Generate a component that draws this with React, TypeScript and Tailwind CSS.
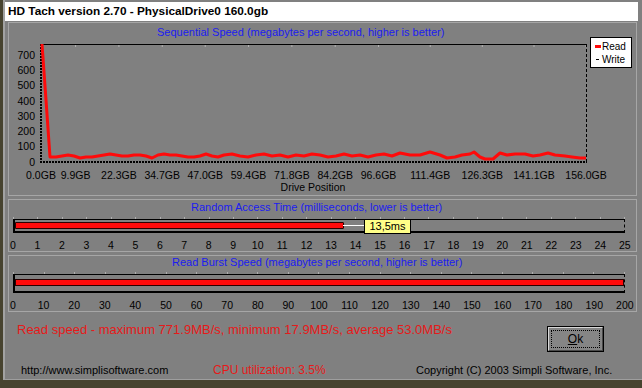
import React from "react";

const gbLabels = ["0.0", "9.9", "22.3", "34.7", "47.0", "59.4", "71.8", "84.2", "96.6", "111.4", "126.3", "141.1", "156.0"];

// page coordinates of the read curve
const readPoints: [number, number][] = [
  [42, 44], [46, 100], [50, 157], [56, 157], [62, 156], [68, 155], [74, 156], [80, 158], [86, 157],
  [92, 157], [98, 156], [104, 155], [110, 154], [116, 155], [122, 156], [128, 156], [134, 155],
  [140, 155], [146, 156], [152, 158], [158, 155], [164, 154], [170, 155], [176, 155], [182, 156],
  [188, 157], [194, 157], [200, 156], [206, 154], [212, 156], [218, 157], [224, 155], [232, 154],
  [240, 156], [248, 157], [256, 155], [264, 154], [272, 156], [280, 155], [288, 157], [296, 155],
  [304, 156], [312, 154], [320, 155], [328, 157], [336, 156], [344, 154], [352, 156], [360, 155],
  [368, 157], [376, 155], [384, 154], [392, 156], [400, 153], [410, 155], [420, 155], [430, 152],
  [440, 155], [447, 158], [455, 157], [462, 155], [470, 154], [474, 152], [480, 157], [485, 159],
  [493, 159], [500, 153], [507, 155], [515, 154], [525, 154], [533, 156], [540, 155], [548, 153],
  [555, 155], [565, 156], [572, 157], [580, 158], [586, 158],
];

const svgFont = "Liberation Sans, Arial, sans-serif";

function SeqChart() {
  const yTicks = [0, 100, 200, 300, 400, 500, 600, 700];
  return (
    <svg width={627} height={156} className="block">
      <g transform="translate(-9 -39)">
        {yTicks.map((v) => (
          <text key={v} x={35} y={162 - v * 0.1529 + 3.7} textAnchor="end" fontSize={10.5} fontFamily={svgFont} fill="#000">
            {v}
          </text>
        ))}
        {gbLabels.map((g) => {
          const x = 41 + parseFloat(g) * 3.494;
          return (
            <g key={g}>
              <line x1={x} y1={45} x2={x} y2={47} stroke="#b4b4b4" strokeWidth={1} />
              <text x={x} y={178.7} textAnchor="middle" fontSize={10.5} fontFamily={svgFont} fill="#000">
                {g}GB
              </text>
            </g>
          );
        })}
        <text x={313} y={190.8} textAnchor="middle" fontSize={10.5} fontFamily={svgFont} fill="#000">
          Drive Position
        </text>
        <line x1={41} y1={44.5} x2={587} y2={44.5} stroke="#000" strokeWidth={1} />
        <line x1={586.5} y1={44} x2={586.5} y2={162} stroke="#000" strokeWidth={1} strokeDasharray="3 2" />
        <line x1={41} y1={44} x2={41} y2={163} stroke="#000" strokeWidth={2} strokeDasharray="2 1" />
        <line x1={40} y1={162} x2={587} y2={162} stroke="#000" strokeWidth={2} strokeDasharray="2 1" />
        <polyline
          points={readPoints.map((p) => p.join(",")).join(" ")}
          fill="none"
          stroke="#ff0a0a"
          strokeWidth={3}
          strokeLinejoin="round"
        />
      </g>
    </svg>
  );
}

function ScaleLabels({ values }: { values: number[] }) {
  return (
    <div className="ml-[4px] flex h-[11px] w-[612px] justify-between text-[10.5px] leading-[11px] text-black">
      {values.map((v) => (
        <div key={v} className="flex w-0 justify-center whitespace-nowrap">
          {v}
        </div>
      ))}
    </div>
  );
}

function Ticks({ count }: { count: number }) {
  return (
    <div className="absolute left-[-2px] right-[-1px] top-[-3px] flex h-[2px] justify-between">
      {Array.from({ length: count }).map((_, i) => (
        <div key={i} className="h-[2px] w-px bg-[#b0b0b0]" />
      ))}
    </div>
  );
}

export default function App() {
  const ms = Array.from({ length: 26 }, (_, i) => i);
  const burst = Array.from({ length: 21 }, (_, i) => i * 10);

  return (
    <div className="h-[388px] w-[642px] overflow-hidden bg-[#47432f] font-['Liberation_Sans',Arial,sans-serif]">
      <div className="ml-[3px] box-border h-[380px] w-[639px] border-b border-l-2 border-b-[#9e9e9e] border-l-[#a2a2a2] bg-[#808080] pt-[2px]">
        {/* title bar */}
        <div className="flex h-[19px] w-[633px] items-center bg-white pl-[3px] text-[11.8px] font-bold text-black">
          HD Tach version 2.70 - PhysicalDrive0 160.0gb
        </div>

        {/* sequential speed */}
        <div className="relative ml-[3px] mt-[1px] box-border h-[174px] w-[629px] border border-[#a6a6a6]">
          <div className="mt-[2px] h-[14px] pl-[148px] text-[11px] leading-[14px] text-[#1c1cf0]">
            Sequential Speed (megabytes per second, higher is better)
          </div>
          <SeqChart />
          <div className="absolute left-[581px] top-[14px] box-border flex h-[31px] w-[42px] flex-col justify-center border border-black bg-white pl-[4px] text-[10px] leading-[13px] text-black">
            <div className="flex items-center">
              <span className="mr-[1px] h-[3px] w-[6px] bg-[#ff0a0a]" />
              Read
            </div>
            <div className="flex items-center">
              <span className="mr-[3px] ml-[1px] h-px w-[3px] bg-black" />
              Write
            </div>
          </div>
        </div>

        {/* random access */}
        <div className="ml-[3px] mt-[3px] box-border h-[53px] w-[629px] border border-[#a6a6a6]">
          <div className="h-[14px] pl-[182px] text-[11px] leading-[14px] text-[#1c1cf0]">
            Random Access Time (milliseconds, lower is better)
          </div>
          <div className="relative ml-[4px] mt-[5px] box-border h-[14px] w-[612px] border-b-2 border-l-2 border-r border-t border-black [border-right-style:dashed]">
            <Ticks count={26} />
            <div className="mt-[2px] box-border h-[7px] w-[329px] rounded-r-[1px] border border-[#2a0000] bg-[#ff0a0a]" />
            <div className="absolute left-[328px] top-[5px] h-px w-[21px] bg-white" />
            <div className="absolute left-[349px] top-[-1px] box-border flex h-[15px] w-[47px] items-center justify-center border border-black bg-[#ffff88] text-[11px] text-black">
              13,5ms
            </div>
          </div>
          <div className="mt-[7px]">
            <ScaleLabels values={ms} />
          </div>
        </div>

        {/* burst speed */}
        <div className="ml-[3px] mt-[3px] box-border h-[57px] w-[629px] border border-[#a6a6a6]">
          <div className="h-[12px] pl-[163px] text-[11px] leading-[12px] text-[#1c1cf0]">
            Read Burst Speed (megabytes per second, higher is better)
          </div>
          <div className="relative ml-[4px] mt-[6px] box-border h-[19px] w-[612px] border-b-2 border-l-2 border-r border-t border-black [border-right-style:dashed]">
            <Ticks count={21} />
            <div className="mt-[4px] box-border h-[7px] w-full border border-[#2a0000] bg-[#ff0a0a]" />
          </div>
          <div className="mt-[7px]">
            <ScaleLabels values={burst} />
          </div>
        </div>

        {/* footer */}
        <div className="flex items-start pl-[12px] pt-[10px]">
          <div className="text-[13px] leading-[16px] text-[#e61a1a]">
            Read speed - maximum 771.9MB/s, minimum 17.9MB/s, average 53.0MB/s
          </div>
          <div className="ml-auto mr-[38px] mt-[4px] box-border h-[26px] w-[57px] border border-black bg-[#858585]">
            <div className="box-border h-full w-full border border-b-[#4a4a4a] border-l-[#d8d8d8] border-r-[#4a4a4a] border-t-[#d8d8d8] p-[2px]">
              <div className="box-border flex h-full w-full items-center justify-center border border-dotted border-black text-[12px] text-black">
                <span className="underline">O</span>k
              </div>
            </div>
          </div>
        </div>
        <div className="mt-[11px] flex items-baseline pl-[16px] text-black">
          <div className="w-[192px] text-[11px] leading-[14px]">http://www.simplisoftware.com</div>
          <div className="w-[203px] text-[12px] leading-[14px] text-[#e61a1a]">CPU utilization: 3.5%</div>
          <div className="text-[11px] leading-[14px]">Copyright (C) 2003 Simpli Software, Inc.</div>
        </div>
      </div>
    </div>
  );
}
